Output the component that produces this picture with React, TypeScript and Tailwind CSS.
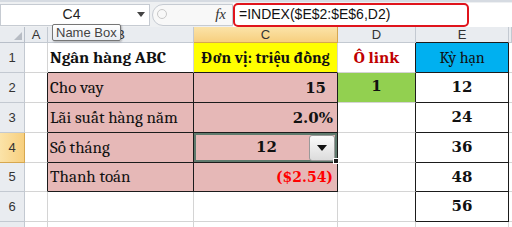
import React from "react";

const GRID = "#d4d4d4";
const BLACK = "#1b1b1b";

type Cell = {
  text?: string;
  r?: string;
  b?: string;
  bg?: string;
  cls?: string;
};

const rowHeights = [30, 30, 30, 30, 29, 30, 30];

const SERIF = "font-['Cambria','Liberation_Serif',serif]";
const NUM = "!font-['DejaVu_Serif',serif] font-bold text-[15px]";

const rows: Cell[][] = [
  [
    { r: GRID, b: GRID },
    { text: "Ngân hàng ABC", r: GRID, b: BLACK, cls: "font-bold text-[17px] pl-[2px] !items-center !pb-0" },
    { text: "Đơn vị: triệu đồng", bg: "#ffff00", r: GRID, b: BLACK, cls: "font-bold text-[16px] justify-center !items-center !pb-0" },
    { text: "Ô link", r: BLACK, b: GRID, cls: "font-bold text-[17px] text-[#c00000] justify-center !items-center !pb-0" },
    { text: "Kỳ hạn", bg: "#00b0f0", r: BLACK, b: BLACK, cls: "text-[16px] justify-center !items-center !pb-0" },
  ],
  [
    { r: BLACK, b: GRID },
    { text: "Cho vay", bg: "#e6b8b7", r: BLACK, b: BLACK, cls: "text-[17px] pl-[2px]" },
    { text: "15", bg: "#e6b8b7", r: BLACK, b: BLACK, cls: `${NUM} justify-end pr-[11px] !pb-[3px]` },
    { text: "1", bg: "#92d050", r: BLACK, b: GRID, cls: `${NUM} justify-center !items-center !pb-[3px]` },
    { text: "12", r: BLACK, b: BLACK, cls: `${NUM} justify-center !items-center !pb-0` },
  ],
  [
    { r: BLACK, b: GRID },
    { text: "Lãi suất hàng năm", bg: "#e6b8b7", r: BLACK, b: BLACK, cls: "text-[17px] pl-[2px]" },
    { text: "2.0%", bg: "#e6b8b7", r: BLACK, b: BLACK, cls: `${NUM} justify-end pr-[4px] !pb-[3px]` },
    { r: BLACK, b: GRID },
    { text: "24", r: BLACK, b: BLACK, cls: `${NUM} justify-center !items-center !pb-0` },
  ],
  [
    { r: BLACK, b: GRID },
    { text: "Số tháng", bg: "#e6b8b7", r: BLACK, b: BLACK, cls: "text-[17px] pl-[2px]" },
    { text: "C4", bg: "#e6b8b7", r: BLACK, b: BLACK },
    { r: BLACK, b: GRID },
    { text: "36", r: BLACK, b: BLACK, cls: `${NUM} justify-center !items-center !pb-0` },
  ],
  [
    { r: BLACK, b: GRID },
    { text: "Thanh toán", bg: "#e6b8b7", r: BLACK, b: BLACK, cls: "text-[17px] pl-[2px]" },
    { text: "($2.54)", bg: "#e6b8b7", r: BLACK, b: BLACK, cls: `${NUM} !text-[14px] text-[#ff0000] justify-end pr-[4px] !pb-[3px]` },
    { r: BLACK, b: GRID },
    { text: "48", r: BLACK, b: BLACK, cls: `${NUM} justify-center !items-center !pb-0` },
  ],
  [
    { r: GRID, b: GRID },
    { r: GRID, b: GRID },
    { r: GRID, b: GRID },
    { r: BLACK, b: GRID },
    { text: "56", r: BLACK, b: BLACK, cls: `${NUM} justify-center !items-center !pb-0` },
  ],
  [
    { r: GRID, b: GRID },
    { r: GRID, b: GRID },
    { r: GRID, b: GRID },
    { r: GRID, b: GRID },
    { r: GRID, b: GRID },
  ],
];

// C4: active cell with the data validation dropdown
const SelectedCell = () => (
  <div className="relative h-full w-full border-2 border-[#5f7a6d] flex items-center">
    <span className="flex-1 text-center pl-[28px] font-bold text-[15px] text-[#111] font-['DejaVu_Serif',serif]">12</span>
    <div className="w-[26px] h-[26px] rounded-[3px] border border-[#9a9a9a] bg-gradient-to-b from-[#fbfbfb] to-[#dcdcdc] flex items-center justify-center">
      <svg width="10" height="6" viewBox="0 0 10 6">
        <path d="M0 0h10L5 6z" fill="#111" />
      </svg>
    </div>
    <div className="absolute -right-[4px] -bottom-[4px] w-[6px] h-[6px] bg-[#1b1b1b] border border-white" />
  </div>
);

const colHeaders = ["A", "B", "C", "D", "E", ""];

export default function App() {
  return (
    <div className="w-[512px] h-[227px] overflow-hidden bg-white font-['Liberation_Sans',Arial,sans-serif]">
      {/* formula bar */}
      <div className="h-[27px] bg-[#eef0f2] border-t-2 border-[#d6dbe2] flex items-center">
        <div className="w-[150px] h-[22px] bg-white border border-[#c6cbd2] flex items-center">
          <span className="flex-1 text-center text-[14px] text-[#222] pl-[5px]">C4</span>
          <svg width="8" height="5" viewBox="0 0 8 5" className="mr-[4px]">
            <path d="M0 0h8L4 5z" fill="#444" />
          </svg>
        </div>
        <div className="w-[81px] h-[22px] ml-[2px] bg-[#f8f8f8] border border-[#c6cbd2] rounded-l-[11px] flex items-center">
          <div className="w-[10px] h-[10px] rounded-full border border-[#c8c8c8] ml-[4px] mt-[-2px]" />
          <span className="ml-auto mr-[6px] italic text-[15px] text-[#333] font-['Liberation_Serif',serif]">fx</span>
        </div>
        <div className="flex-1 h-[24px] bg-white flex items-center">
          <div className="w-[236px] h-[24px] border-[2.5px] border-[#e0141c] rounded-[5px] flex items-center pl-[4px] text-[14px] text-[#111]">
            =INDEX($E$2:$E$6,D2)
          </div>
        </div>
      </div>

      {/* sheet */}
      <div className="relative grid grid-cols-[25px_23px_146px_144px_78px_93px_1fr]">
        {/* column headers */}
        <div className="h-[16px] bg-[#e9ecf0] border-r border-b border-[#b8bfc9] flex items-end justify-end">
          <svg width="8" height="8" viewBox="0 0 8 8" className="mr-[2px] mb-[2px]">
            <path d="M8 0v8H0z" fill="#b7bcc4" />
          </svg>
        </div>
        {colHeaders.map((c, i) => (
          <div
            key={i}
            className={`h-[16px] border-r border-b text-[13px] leading-[15px] text-center text-[#333] ${
              c === "C"
                ? "bg-gradient-to-b from-[#fbe3a8] to-[#f7cf7e] border-[#d6a74f]"
                : c === "E"
                ? "bg-[#e9ecf0] border-r-[#c3c9d1] border-b-[#1b1b1b]"
                : "bg-[#e9ecf0] border-[#c3c9d1]"
            }`}
          >
            {c}
          </div>
        ))}

        {rows.map((row, ri) => (
          <React.Fragment key={ri}>
            <div
              style={{ height: rowHeights[ri] }}
              className={`border-r border-b text-[13px] flex items-center justify-center text-[#333] ${
                ri === 3
                  ? "bg-gradient-to-r from-[#fbe3a8] to-[#f7cf7e] border-[#d6a74f]"
                  : "bg-[#e9ecf0] border-[#c3c9d1]"
              }`}
            >
              {ri < 6 ? ri + 1 : ""}
            </div>
            {row.map((cell, ci) => (
              <div
                key={ci}
                style={{ height: rowHeights[ri], borderRightColor: cell.r, borderBottomColor: cell.b, backgroundColor: cell.bg }}
                className={`border-r border-b flex items-end pb-[2px] overflow-visible whitespace-nowrap text-[#111] ${SERIF} ${cell.cls ?? ""} ${
                  cell.text === "C4" ? "!pb-0" : ""
                }`}
              >
                {cell.text === "C4" ? <SelectedCell /> : cell.text}
              </div>
            ))}
            <div style={{ height: rowHeights[ri] }} className="border-b border-[#d4d4d4]" />
          </React.Fragment>
        ))}

        {/* Name Box tooltip */}
        <div className="absolute left-[52px] -top-[3px] h-[17px] px-[3px] bg-gradient-to-b from-white to-[#e8ecf2] border border-[#767676] rounded-[2px] text-[13px] leading-[15px] text-[#444] shadow-[1px_1px_2px_rgba(0,0,0,0.25)]">
          Name Box
        </div>
      </div>
    </div>
  );
}
